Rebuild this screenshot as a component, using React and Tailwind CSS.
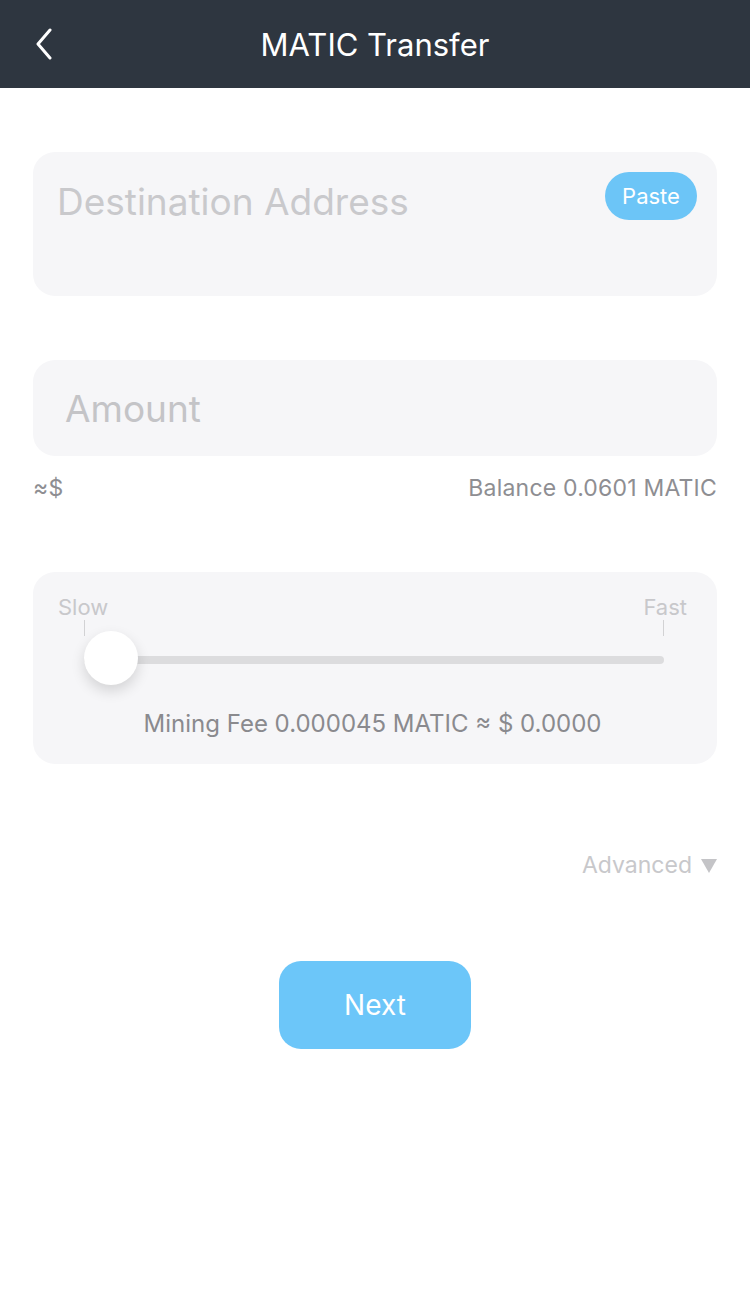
import React from 'react';

const Back = () => (
  <svg width="20" height="32" viewBox="0 0 20 32" fill="none">
    <path d="M16 2 L4 16 L16 30" stroke="white" strokeWidth="3" strokeLinecap="round" strokeLinejoin="round" />
  </svg>
);

export default function App() {
  return (
    <div className="w-[750px] h-[1294px] bg-white" style={{ fontFamily: 'Inter, Roboto, "Liberation Sans", sans-serif' }}>
      {/* Header */}
      <header className="h-[88px] bg-[#2e3640] flex items-center relative">
        <div className="absolute left-[34px] top-[28px]">
          <Back />
        </div>
        <h1 className="flex-1 text-center text-white text-[31px] leading-none">MATIC Transfer</h1>
      </header>

      <main className="px-[33px] pt-[64px]">
        {/* Destination */}
        <div className="h-[144px] rounded-[22px] bg-[#f6f6f8] flex items-start justify-between pl-[24px] pr-[20px] pt-[20px]">
          <span className="text-[37px] text-[#c9c9cc] leading-none mt-[11px]">Destination Address</span>
          <button className="w-[92px] h-[48px] rounded-full bg-[#6cc5f7] text-white text-[22px]">Paste</button>
        </div>

        {/* Amount */}
        <div className="mt-[64px] h-[96px] rounded-[22px] bg-[#f6f6f8] flex items-center pl-[32px]">
          <span className="text-[37px] text-[#c4c4c7] leading-none">Amount</span>
        </div>
        <div className="flex justify-between mt-[21px] text-[23px] tracking-[0.2px] text-[#8e8e92] leading-none">
          <span>≈$</span>
          <span>Balance 0.0601 MATIC</span>
        </div>

        {/* Fee slider */}
        <div className="mt-[72px] h-[192px] rounded-[22px] bg-[#f6f6f8] pl-[25px] pr-[30px] pt-[24px]">
          <div className="flex justify-between text-[22px] leading-none text-[#c8c8cb]">
            <span>Slow</span>
            <span>Fast</span>
          </div>
          <div className="relative ml-[26px] mr-[23px] h-[70px]">
            <div className="absolute left-0 top-[2px] w-px h-[16px] bg-[#d2d2d4]" />
            <div className="absolute right-0 top-[2px] w-px h-[16px] bg-[#d2d2d4]" />
            <div className="absolute left-0 right-0 top-[38px] h-[8px] rounded-full bg-[#dcdcde]" />
            <div className="absolute left-0 top-[13px] w-[54px] h-[54px] rounded-full bg-white shadow-[0_6px_14px_rgba(0,0,0,0.14)]" />
          </div>
          <p className="mt-[24px] text-center text-[24px] text-[#8a8a8e] leading-none">Mining Fee 0.000045 MATIC ≈ $ 0.0000</p>
        </div>

        {/* Advanced */}
        <div className="mt-[90px] flex justify-end items-center gap-[9px] text-[23px] text-[#c8c8cb] leading-none">
          <span>Advanced</span>
          <svg width="16" height="14" viewBox="0 0 16 14">
            <path d="M0 0 H16 L8 14 Z" fill="#c4c4c7" />
          </svg>
        </div>

        {/* Next */}
        <div className="flex justify-center mt-[84px]">
          <button className="w-[192px] h-[88px] rounded-[22px] bg-[#6cc6f9] text-white text-[28px]">Next</button>
        </div>
      </main>
    </div>
  );
}
